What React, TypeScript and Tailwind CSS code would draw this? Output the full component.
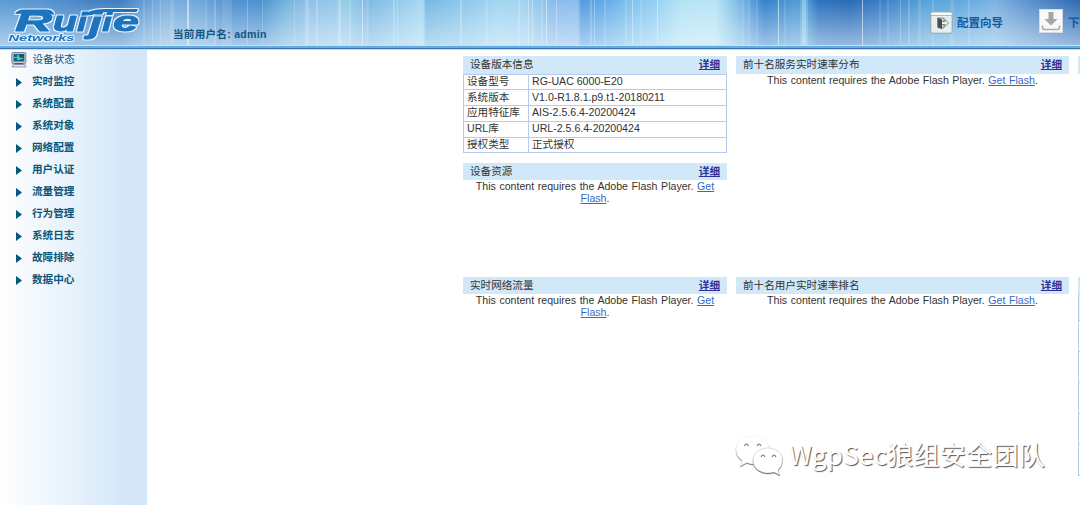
import type { ReactNode } from "react";

const menu = ["实时监控", "系统配置", "系统对象", "网络配置", "用户认证", "流量管理", "行为管理", "系统日志", "故障排除", "数据中心"];

const info = [
  ["设备型号", "RG-UAC 6000-E20"],
  ["系统版本", "V1.0-R1.8.1.p9.t1-20180211"],
  ["应用特征库", "AIS-2.5.6.4-20200424"],
  ["URL库", "URL-2.5.6.4-20200424"],
  ["授权类型", "正式授权"],
];

const streaks: [number, number, string, number][] = [
  [143, 2, "#fff", 0.15], [152, 1, "#fff", 0.2], [160, 1, "#fff", 0.2],
  [170, 4, "#fff", 0.12], [187, 2, "#fff", 0.5], [205, 2, "#fff", 0.12], [214, 2, "#fff", 0.2],
  [222, 10, "#fff", 0.1], [247, 1, "#fff", 0.25], [262, 1, "#fff", 0.2], [294, 1, "#fff", 0.2], [305, 4, "#fff", 0.2],
  [316, 2, "#fff", 0.2], [338, 3, "#fff", 0.25], [349, 2, "#fff", 0.2], [362, 1, "#fff", 0.5], [366, 3, "#fff", 0.12],
  [393, 2, "#fff", 0.22], [397, 1, "#fff", 0.22], [460, 2, "#fff", 0.25], [485, 3, "#fff", 0.12], [518, 2, "#fff", 0.2],
  [528, 1, "#fff", 0.35], [532, 1, "#fff", 0.3], [541, 2, "#fff", 0.2], [546, 1, "#fff", 0.5], [556, 1, "#fff", 0.3],
  [590, 2, "#fff", 0.2], [594, 1, "#fff", 0.3], [604, 2, "#fff", 0.14], [625, 2, "#fff", 0.15], [632, 1, "#fff", 0.4], [640, 2, "#fff", 0.15],
  [657, 1, "#fff", 0.35], [742, 2, "#fff", 0.12], [748, 2, "#fff", 0.12], [756, 2, "#fff", 0.12],
  [778, 1, "#dff", 0.6], [784, 2, "#fff", 0.12], [800, 8, "#c8f4ff", 0.2], [802, 4, "#c8f4ff", 0.35], [862, 1, "#fff", 0.55],
  [879, 2, "#fff", 0.12], [887, 2, "#fff", 0.12], [900, 1, "#fff", 0.25], [908, 2, "#fff", 0.18], [918, 3, "#fff", 0.12],
  [932, 2, "#fff", 0.15], [950, 4, "#fff", 0.12], [968, 2, "#fff", 0.14],
];

const sky: [number, string][] = [
  [0, "#5a9ad3"], [40, "#5595d0"], [90, "#4482c4"], [120, "#3f7dc1"], [140, "#5c98d2"], [165, "#7aafdd"], [200, "#6ea6da"], [232, "#4f90d0"],
  [262, "#4b91cf"], [285, "#72b1dc"], [310, "#90c0e6"], [345, "#94cbe9"], [370, "#7fb9e2"], [400, "#94cbec"], [423, "#a8d8f1"],
  [426, "#76b7e2"], [460, "#8bc5e9"], [500, "#a3d6f1"], [525, "#a0d2f0"], [550, "#88bcea"], [578, "#8bbdee"], [581, "#5599e0"], [598, "#5ba4e5"],
  [625, "#78bdec"], [655, "#94cff0"], [682, "#b4e3f5"], [715, "#b8e5f5"], [745, "#6aade0"], [765, "#3580ca"], [795, "#4e9ad5"], [808, "#4b96d2"],
  [818, "#2d73bf"], [850, "#286ab5"], [885, "#3c80c8"], [925, "#56a2d8"], [960, "#60a9dd"], [995, "#7db2e1"], [1030, "#5b90cc"],
  [1080, "#2c6ab1"],
];

function HeaderArt() {
  return (
    <svg className="absolute inset-0" width="1080" height="50" viewBox="0 0 1080 50" aria-hidden="true">
      <defs>
        <linearGradient id="sky">
          {sky.map(([x, color]) => <stop key={x} offset={x / 1080} stopColor={color} />)}
        </linearGradient>
        <linearGradient id="haze" x1="0" y1="0" x2="0" y2="1">
          <stop offset="0" stopColor="#f3fbff" stopOpacity="0" />
          <stop offset="1" stopColor="#f0faff" stopOpacity=".56" />
        </linearGradient>
      </defs>
      <rect width="1080" height="46" fill="url(#sky)" />
      {streaks.map(([x, w, color, o]) => <rect key={x} x={x} width={w} height="46" fill={color} opacity={o} />)}
      <rect width="1080" height="46" fill="url(#haze)" />
      <rect y="45" width="1080" height="1" fill="#bfe5fa" />
      <rect y="46" width="1080" height="2" fill="#64aee2" />
      <rect y="48" width="1080" height="1" fill="#3777b9" />
      <rect y="49" width="1080" height="1" fill="#c8dcee" />
    </svg>
  );
}

function Logo() {
  return (
    <svg className="absolute left-0 top-0" width="150" height="48" viewBox="0 0 150 48">
      <defs>
        <filter id="halo" x="0" y="0" width="150" height="48" filterUnits="userSpaceOnUse" colorInterpolationFilters="sRGB">
          <feMorphology in="SourceAlpha" operator="dilate" radius="1" result="wide" />
          <feGaussianBlur in="wide" stdDeviation=".5" result="soft" />
          <feFlood floodColor="#e9f5fe" />
          <feComposite in2="soft" operator="in" result="edge" />
          <feMerge>
            <feMergeNode in="edge" />
            <feMergeNode in="SourceGraphic" />
          </feMerge>
        </filter>
      </defs>
      <g filter="url(#halo)" fontFamily="Liberation Sans, sans-serif" fontWeight="700" fontStyle="italic" fill="#1d74be" stroke="#1d74be" strokeLinejoin="round">
        <g strokeWidth=".9">
          <text x="15" y="31" fontSize="28" textLength="37" lengthAdjust="spacingAndGlyphs">R</text>
          <text x="53" y="31" fontSize="28" textLength="24" lengthAdjust="spacingAndGlyphs">u</text>
          <text x="77" y="31" fontSize="26" textLength="10" lengthAdjust="spacingAndGlyphs">i</text>
          <text x="89" y="33" fontSize="30" textLength="13" lengthAdjust="spacingAndGlyphs">j</text>
          <text x="102" y="31" fontSize="26" textLength="10" lengthAdjust="spacingAndGlyphs">i</text>
          <text x="113" y="31" fontSize="28.500" textLength="26" lengthAdjust="spacingAndGlyphs">e</text>
        </g>
        <g stroke="none">
          <path d="M15 14Q17 9.500 24 9.500H47Q54 10 54 15L47 13Z" />
          <path d="M81 16Q90 9 104 9H138L136.500 12H112Q99 11.500 92 15Z" />
        </g>
        <text x="8.500" y="41" fontSize="9.200" textLength="66" lengthAdjust="spacingAndGlyphs" stroke="none">Networks</text>
      </g>
    </svg>
  );
}

function WizardIcon() {
  return (
    <svg width="23" height="23" viewBox="0 0 23 23">
      <rect x=".8" y=".8" width="21.400" height="21.400" rx="1.500" fill="#e4eff0" stroke="#8fa4ac" />
      <path d="M1.500 2H21.500V4H1.500Z" fill="#f8ffff" />
      <path d="M1 4.500H22" stroke="#94aeb4" strokeWidth=".8" />
      <path d="M8 7H14V17H8Z" fill="#d7dcdc" stroke="#777" strokeWidth=".8" />
      <path d="M7.500 6.500L12 8.500V18L7.500 16Z" fill="#4c4c4c" />
      <path d="M12 10.500H15V8.500L18.500 12L15 15.500V13.500H12" fill="#f2f2f2" stroke="#777" strokeWidth=".9" />
    </svg>
  );
}

function DownloadIcon() {
  return (
    <svg width="24" height="24" viewBox="0 0 24 24">
      <rect width="24" height="24" fill="#d5d9e3" />
      <rect x="1" y="1" width="22" height="22" fill="#f8f8f9" />
      <path d="M9.500 3H14.500V10H18.500L12 16.500L5.500 10H9.500Z" fill="#a5a5a5" />
      <path d="M3.500 16.500V18.500Q3.500 20.500 5.500 20.500H18.500Q20.500 20.500 20.500 18.500V16.500" fill="none" stroke="#aaa" strokeWidth="1.600" />
    </svg>
  );
}

function ComputerIcon() {
  return (
    <svg width="16" height="16" viewBox="0 0 16 16">
      <rect x=".8" y=".5" width="14" height="11" rx="1" fill="#c4cbd7" stroke="#7b8498" />
      <rect x="2.500" y="2" width="10.800" height="7.500" fill="#126b7d" />
      <path d="M3 5H6V3H8V5H9V6H12V7H9V8H6V6H3Z" fill="#53c5b5" />
      <path d="M9 2.500H13V4.500H9Z" fill="#234a66" />
      <path d="M4 11H12V13H4Z" fill="#515a77" />
      <path d="M2 12.500H14L15 15H1Z" fill="#dfe3ed" stroke="#8089a2" strokeWidth=".8" />
    </svg>
  );
}

function Title({ children }: { children: ReactNode }) {
  return (
    <div className="flex h-[17.500px] items-center justify-between bg-[#d0e8f8] pr-[7px] pb-px pl-[7px] leading-[16px]">
      <span>{children}</span>
      <a className="font-bold text-[#30309a] underline">详细</a>
    </div>
  );
}

function Flash() {
  return (
    <p className="px-2 text-center leading-[12.300px] [word-spacing:.65px]">
      This content requires the Adobe Flash Player. <a className="text-[#3668c6] underline">Get Flash</a>.
    </p>
  );
}

function Watermark() {
  return (
    <div className="absolute left-[734px] top-[431px] flex items-center">
      <svg width="52" height="46" viewBox="0 0 52 46">
        <g strokeLinejoin="round">
          <g className="[filter:drop-shadow(.7px_1px_.3px_#777)]">
            <path d="M19 5C9 5 2 11 2 18.500C2 23 4 26.500 8 29.500L6.500 35L13 31.500Q16 33 19 33C28 33 36 27 36 19C36 11 28 5 19 5Z" fill="#fff" stroke="#ddd" strokeWidth=".3" />
          </g>
          <g className="[filter:drop-shadow(.7px_1px_.3px_#777)]">
            <path d="M34 17C26 17 19 22 19 29.500C19 37 26 42 34 42Q37 42 40 41L45.500 44L44 39Q48.500 35 48.500 29.500C48.500 22 42 17 34 17Z" fill="#fff" stroke="#aaa" strokeWidth=".4" />
          </g>
        </g>
        <g fill="none" stroke="#777" strokeWidth="1.100">
          <path d="M10.500 15Q12.500 11 14.500 15" />
          <path d="M23 15Q25 11 27 15" />
          <path d="M27 26Q29 22 31 26" />
          <path d="M38 26Q40 22 42 26" />
        </g>
      </svg>
      <span className="ml-[3px] whitespace-nowrap text-[26px] leading-[46px] tracking-[.3px] text-white [font-family:'Noto_Sans_CJK_SC',sans-serif] [text-shadow:1px_1px_1px_#555]">
        WgpSec狼组安全团队
      </span>
    </div>
  );
}

export default function App() {
  return (
    <div className="relative h-[505px] w-[1080px] overflow-hidden bg-white text-[10.600px] text-[#333] [font-family:'Liberation_Sans','Noto_Sans_CJK_SC',sans-serif]">
      <header className="relative h-[50px] font-bold">
        <HeaderArt />
        <Logo />
        <div className="relative flex h-[46px] items-start text-[#15567f]">
          <span className="ml-[173px] mt-[26px] w-[757px] shrink-0 leading-4 tracking-[.25px]">当前用户名: admin</span>
          <div className="flex shrink-0 items-center pt-[11px] text-[11.500px] text-[#165aa0]">
            <WizardIcon />
            <span className="ml-[4px] pt-[2px] leading-none">配置向导</span>
          </div>
          <div className="ml-[36px] flex shrink-0 items-center pt-[9px] text-[11.500px] text-[#165aa0]">
            <DownloadIcon />
            <span className="ml-[5px] pt-[5px] leading-none">下载</span>
          </div>
        </div>
      </header>
      <div className="flex h-[455px]">
        <aside className="w-[147px] shrink-0 bg-gradient-to-r from-white to-[#d4e7f8] to-85% text-[#0a557a]">
          <div className="flex h-[20px] items-center pl-[11px]">
            <ComputerIcon />
            <span className="ml-[5.500px]">设备状态</span>
          </div>
          <ul>
            {menu.map((item) => (
              <li key={item} className="flex h-[22px] items-center pt-[2px] pl-[16px] font-bold">
                <svg width="6" height="9" viewBox="0 0 6 9" className="mt-px">
                  <path d="M0 0L6 4.500L0 9Z" fill="#08577e" />
                </svg>
                <span className="ml-[10px]">{item}</span>
              </li>
            ))}
          </ul>
        </aside>
        <main className="ml-[316px] grid shrink-0 grid-cols-[264px_333px_40px] gap-x-[9px] pt-[6px]">
          <div>
            <section className="h-[106.500px]">
              <Title>设备版本信息</Title>
              <table className="w-full table-fixed border-collapse">
                <colgroup>
                  <col className="w-[65px]" />
                  <col />
                </colgroup>
                <tbody>
                  {info.map(([name, value]) => (
                    <tr key={name} className="h-[15.800px]">
                      <td className="border border-[#b4caf0] p-0 pb-px pl-[3px] leading-[13px]">{name}</td>
                      <td className="border border-[#b4caf0] p-0 pb-px pl-[3px] leading-[13px]">{value}</td>
                    </tr>
                  ))}
                </tbody>
              </table>
            </section>
            <section className="h-[114px]">
              <Title>设备资源</Title>
              <Flash />
            </section>
            <section>
              <Title>实时网络流量</Title>
              <Flash />
            </section>
          </div>
          <div>
            <section className="h-[220.500px]">
              <Title>前十名服务实时速率分布</Title>
              <Flash />
            </section>
            <section>
              <Title>前十名用户实时速率排名</Title>
              <Flash />
            </section>
          </div>
          <div>
            <div className="h-[220.500px]">
              <div className="h-[17.500px] bg-[#d0e8f8]" />
            </div>
            <div className="h-[17.500px] bg-[#d0e8f8]" />
            <div className="border-l border-[#b4caf5]">
              <div className="h-[27px] border-b border-[#b4caf5] bg-[#e3edfc]" />
              <div className="h-[31px] border-b border-[#b4caf5]" />
              <div className="h-[31px] border-b border-[#b4caf5]" />
              <div className="h-[31px] border-b border-[#b4caf5]" />
              <div className="h-[31px] border-b border-[#b4caf5]" />
              <div className="h-[31px] border-b border-[#b4caf5]" />
            </div>
          </div>
        </main>
      </div>
      <Watermark />
    </div>
  );
}
